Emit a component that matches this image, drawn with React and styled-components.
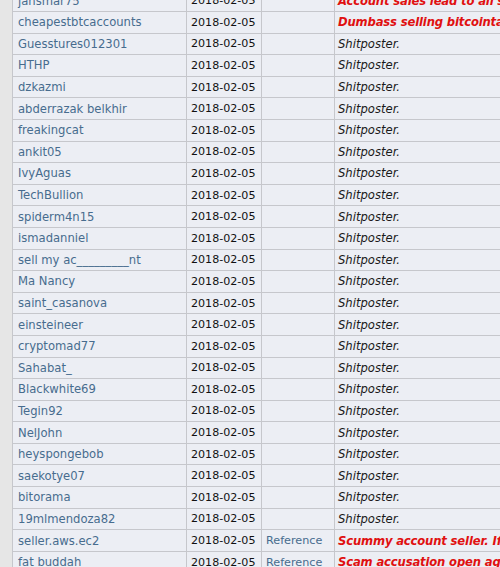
import styled, { createGlobalStyle } from 'styled-components';

const Global = createGlobalStyle`
  html, body {
    margin: 0;
    padding: 0;
    background: #e6e6e6;
    overflow: hidden;
  }
`;

const rows = [
  ['jansmar75', '', 'Account sales lead to all scams. Do not trust.', true],
  ['cheapestbtcaccounts', '', 'Dumbass selling bitcointalk accounts. Do not trust.', true],
  ['Guesstures012301', '', 'Shitposter.'],
  ['HTHP', '', 'Shitposter.'],
  ['dzkazmi', '', 'Shitposter.'],
  ['abderrazak belkhir', '', 'Shitposter.'],
  ['freakingcat', '', 'Shitposter.'],
  ['ankit05', '', 'Shitposter.'],
  ['IvyAguas', '', 'Shitposter.'],
  ['TechBullion', '', 'Shitposter.'],
  ['spiderm4n15', '', 'Shitposter.'],
  ['ismadanniel', '', 'Shitposter.'],
  ['sell my ac_________nt', '', 'Shitposter.'],
  ['Ma Nancy', '', 'Shitposter.'],
  ['saint_casanova', '', 'Shitposter.'],
  ['einsteineer', '', 'Shitposter.'],
  ['cryptomad77', '', 'Shitposter.'],
  ['Sahabat_', '', 'Shitposter.'],
  ['Blackwhite69', '', 'Shitposter.'],
  ['Tegin92', '', 'Shitposter.'],
  ['NelJohn', '', 'Shitposter.'],
  ['heyspongebob', '', 'Shitposter.'],
  ['saekotye07', '', 'Shitposter.'],
  ['bitorama', '', 'Shitposter.'],
  ['19mlmendoza82', '', 'Shitposter.'],
  ['seller.aws.ec2', 'Reference', 'Scummy account seller. If you trade with him, expect a scam.', true],
  ['fat buddah', 'Reference', 'Scam accusation open against this user.', true],
];

const Page = styled.div`
  padding-left: 12px;
  margin-top: -10.6px;
`;

const Table = styled.table`
  border-collapse: collapse;
  border-left: 1px solid #858585;
  background: #eceef4;
  font-family: "DejaVu Sans", Verdana, sans-serif;
  font-size: 11.6px;
  white-space: nowrap;
  table-layout: fixed;
  width: 700px;

  td {
    border: 1px solid #c6c7cc;
    height: 21.6px;
    padding: 0 5px;
    box-sizing: border-box;
    overflow: hidden;
  }
`;

const Link = styled.span`
  color: #476c8e;
`;

const DateCell = styled.td`
  color: #111;
  font-size: 11.1px;
  padding-left: 4px !important;
`;

const RefCell = styled.td`
  font-size: 11.2px;
  padding-left: 4px !important;
`;

const CommentCell = styled.td`
  padding-left: 3px !important;
`;

const Comment = styled.span`
  font-style: italic;
  color: ${p => (p.$bad ? '#e01010' : '#1a1a1a')};
  font-weight: ${p => (p.$bad ? 'bold' : 'normal')};
  letter-spacing: ${p => (p.$bad ? '-0.15px' : '0')};
`;

export default function App() {
  return (
    <Page>
      <Global />
      <Table>
        <colgroup>
          <col style={{ width: 174 }} />
          <col style={{ width: 75 }} />
          <col style={{ width: 73 }} />
          <col />
        </colgroup>
        <tbody>
          {rows.map(([name, ref, text, bad]) => (
            <tr key={name}>
              <td><Link>{name}</Link></td>
              <DateCell>2018-02-05</DateCell>
              <RefCell><Link>{ref}</Link></RefCell>
              <CommentCell><Comment $bad={bad}>{text}</Comment></CommentCell>
            </tr>
          ))}
        </tbody>
      </Table>
    </Page>
  );
}
